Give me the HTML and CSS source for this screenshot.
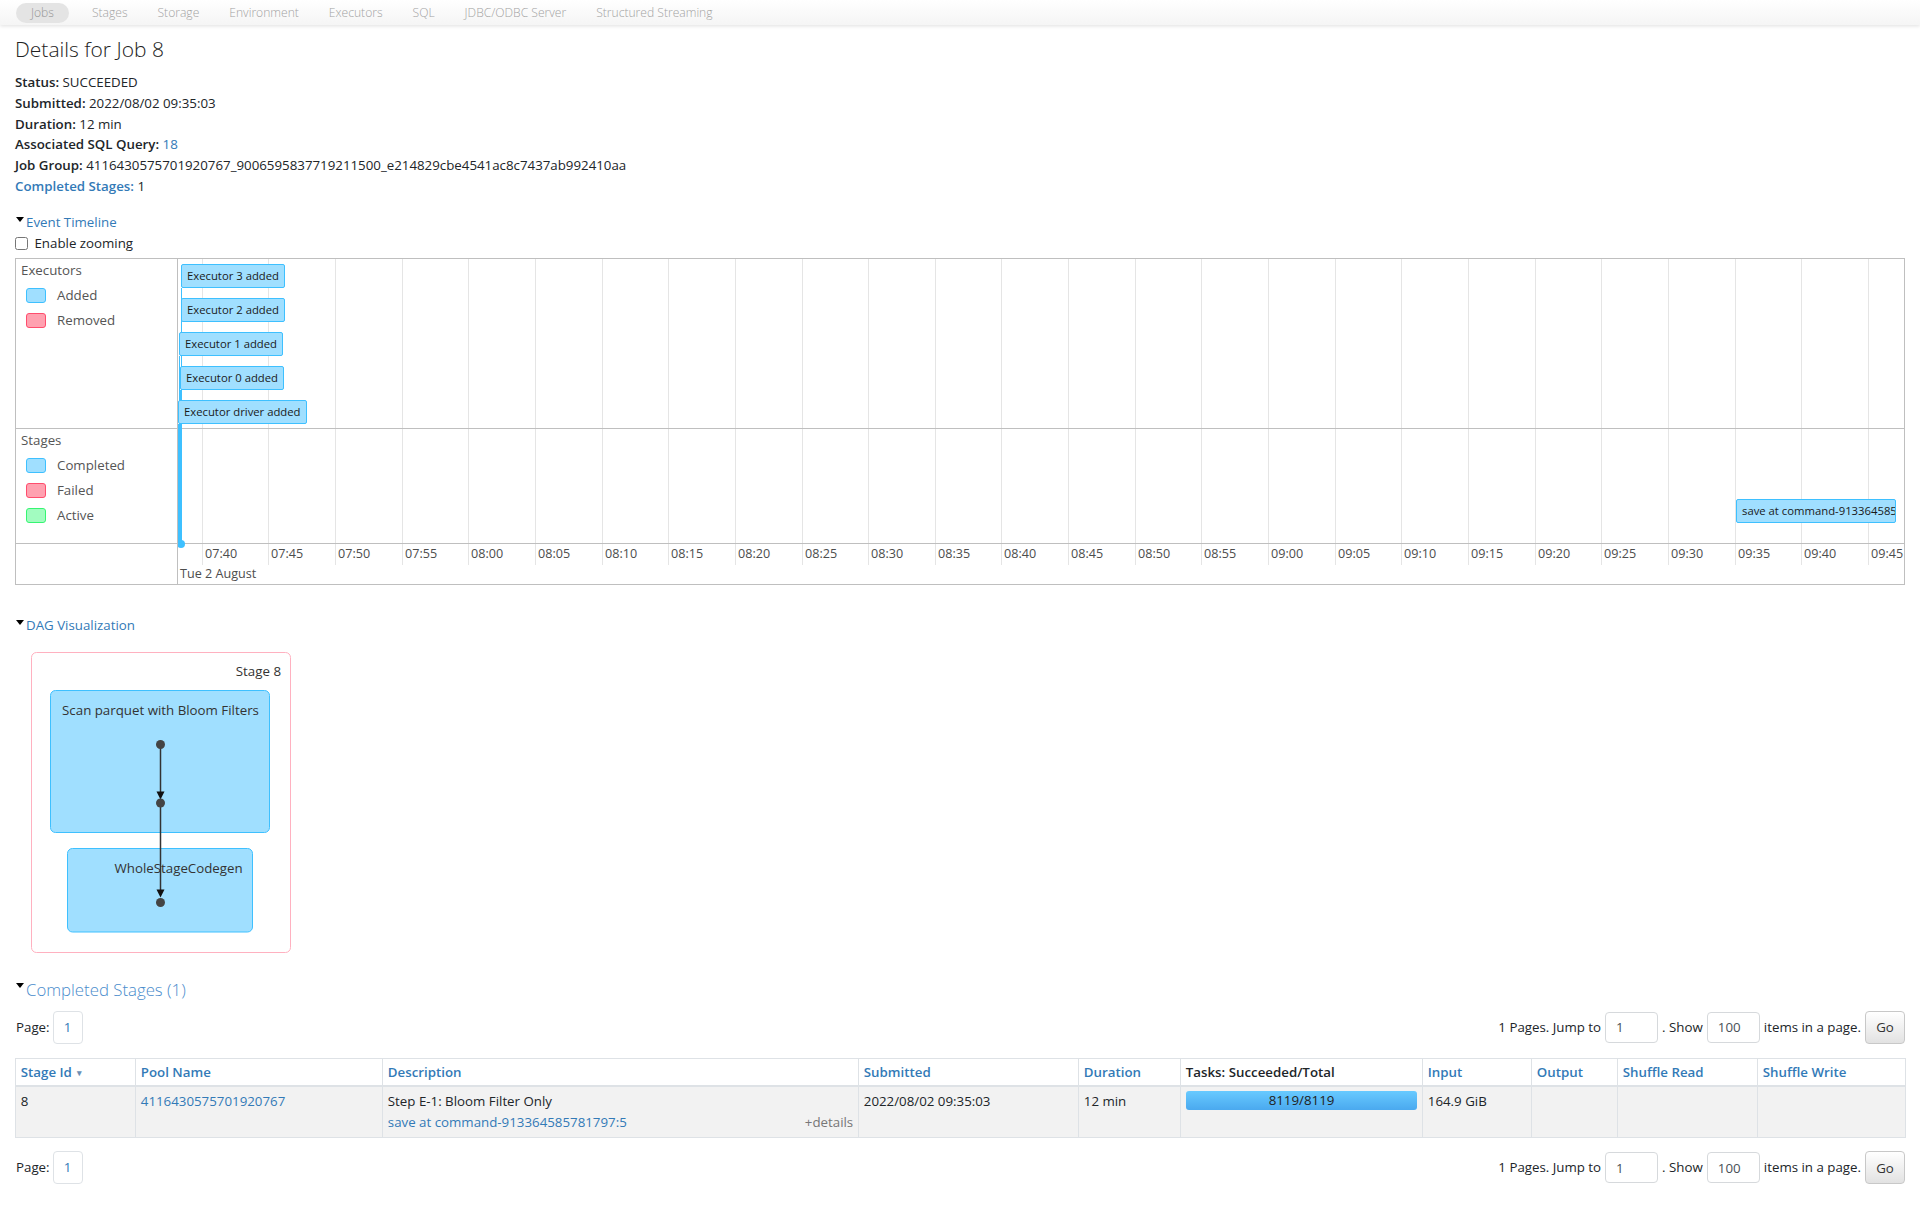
FILE: index.html
```html
<!DOCTYPE html>
<html lang="en">
<head>
<meta charset="utf-8">
<title>Details for Job 8</title>
<link rel="stylesheet" href="styles.css">
</head>
<body>
<nav class="navbar">
  <ul class="nav">
    <li class="nav-item active"><a href="#">Jobs</a></li>
    <li class="nav-item"><a href="#">Stages</a></li>
    <li class="nav-item"><a href="#">Storage</a></li>
    <li class="nav-item"><a href="#">Environment</a></li>
    <li class="nav-item"><a href="#">Executors</a></li>
    <li class="nav-item"><a href="#">SQL</a></li>
    <li class="nav-item"><a href="#">JDBC/ODBC Server</a></li>
    <li class="nav-item"><a href="#">Structured Streaming</a></li>
  </ul>
</nav>
<main class="container">
  <h3 class="page-title">Details for Job 8</h3>
  <ul class="summary">
    <li><strong>Status:</strong> SUCCEEDED</li>
    <li><strong>Submitted:</strong> 2022/08/02 09:35:03</li>
    <li><strong>Duration:</strong> 12 min</li>
    <li><strong>Associated SQL Query:</strong> <a href="#">18</a></li>
    <li><strong>Job Group:</strong> 4116430575701920767_9006595837719211500_e214829cbe4541ac8c7437ab992410aa</li>
    <li><a href="#"><strong>Completed Stages:</strong></a> 1</li>
  </ul>

  <div class="toggle toggle-timeline"><span class="arrow-open"></span><a href="#">Event Timeline</a></div>
  <label class="zoom-toggle"><input type="checkbox"> Enable zooming</label>

  <div class="timeline">
    <div class="tl-legend tl-legend-exec">
      <div class="legend-title">Executors</div>
      <div class="legend-item"><span class="swatch swatch-blue"></span>Added</div>
      <div class="legend-item"><span class="swatch swatch-red"></span>Removed</div>
    </div>
    <div class="tl-legend tl-legend-stage">
      <div class="legend-title">Stages</div>
      <div class="legend-item"><span class="swatch swatch-blue"></span>Completed</div>
      <div class="legend-item"><span class="swatch swatch-red"></span>Failed</div>
      <div class="legend-item"><span class="swatch swatch-green"></span>Active</div>
    </div>
    <div class="tl-legend tl-legend-axis"></div>

    <div class="tl-canvas">
      <svg class="tl-grid" width="1726" height="306" viewBox="0 0 1726 306">
        <rect x="24" y="0" width="1" height="306"/><rect x="90" y="0" width="1" height="306"/>
        <rect x="157" y="0" width="1" height="306"/><rect x="224" y="0" width="1" height="306"/>
        <rect x="290" y="0" width="1" height="306"/><rect x="357" y="0" width="1" height="306"/>
        <rect x="424" y="0" width="1" height="306"/><rect x="490" y="0" width="1" height="306"/>
        <rect x="557" y="0" width="1" height="306"/><rect x="624" y="0" width="1" height="306"/>
        <rect x="690" y="0" width="1" height="306"/><rect x="757" y="0" width="1" height="306"/>
        <rect x="823" y="0" width="1" height="306"/><rect x="890" y="0" width="1" height="306"/>
        <rect x="957" y="0" width="1" height="306"/><rect x="1023" y="0" width="1" height="306"/>
        <rect x="1090" y="0" width="1" height="306"/><rect x="1157" y="0" width="1" height="306"/>
        <rect x="1223" y="0" width="1" height="306"/><rect x="1290" y="0" width="1" height="306"/>
        <rect x="1357" y="0" width="1" height="306"/><rect x="1423" y="0" width="1" height="306"/>
        <rect x="1490" y="0" width="1" height="306"/><rect x="1557" y="0" width="1" height="306"/>
        <rect x="1623" y="0" width="1" height="306"/><rect x="1690" y="0" width="1" height="306"/>
      </svg>
      <div class="tl-row tl-row-exec"></div>
      <div class="tl-row tl-row-stage"></div>
      <div class="tl-row tl-row-axis"></div>

      <span class="tl-line" style="left:3px;top:29px;height:255px"></span>
      <span class="tl-line" style="left:3px;top:63px;height:221px"></span>
      <span class="tl-line" style="left:1px;top:97px;height:187px"></span>
      <span class="tl-line" style="left:2px;top:131px;height:153px"></span>
      <span class="tl-line" style="left:0px;top:165px;height:119px"></span>
      <span class="tl-dot"></span>

      <div class="tl-box" style="left:3px;top:5px">Executor 3 added</div>
      <div class="tl-box" style="left:3px;top:39px">Executor 2 added</div>
      <div class="tl-box" style="left:1px;top:73px">Executor 1 added</div>
      <div class="tl-box" style="left:2px;top:107px">Executor 0 added</div>
      <div class="tl-box" style="left:0px;top:141px">Executor driver added</div>

      <div class="tl-box tl-range" style="left:1558px;top:240px;width:160px" title="save at command-913364585781797:5">save at command-913364585781797:5</div>

      <span class="tl-label" style="left:27px">07:40</span>
      <span class="tl-label" style="left:93px">07:45</span>
      <span class="tl-label" style="left:160px">07:50</span>
      <span class="tl-label" style="left:227px">07:55</span>
      <span class="tl-label" style="left:293px">08:00</span>
      <span class="tl-label" style="left:360px">08:05</span>
      <span class="tl-label" style="left:427px">08:10</span>
      <span class="tl-label" style="left:493px">08:15</span>
      <span class="tl-label" style="left:560px">08:20</span>
      <span class="tl-label" style="left:627px">08:25</span>
      <span class="tl-label" style="left:693px">08:30</span>
      <span class="tl-label" style="left:760px">08:35</span>
      <span class="tl-label" style="left:826px">08:40</span>
      <span class="tl-label" style="left:893px">08:45</span>
      <span class="tl-label" style="left:960px">08:50</span>
      <span class="tl-label" style="left:1026px">08:55</span>
      <span class="tl-label" style="left:1093px">09:00</span>
      <span class="tl-label" style="left:1160px">09:05</span>
      <span class="tl-label" style="left:1226px">09:10</span>
      <span class="tl-label" style="left:1293px">09:15</span>
      <span class="tl-label" style="left:1360px">09:20</span>
      <span class="tl-label" style="left:1426px">09:25</span>
      <span class="tl-label" style="left:1493px">09:30</span>
      <span class="tl-label" style="left:1560px">09:35</span>
      <span class="tl-label" style="left:1626px">09:40</span>
      <span class="tl-label" style="left:1693px">09:45</span>
      <span class="tl-label tl-major" style="left:2px">Tue 2 August</span>
    </div>
  </div>

  <div class="toggle toggle-dag"><span class="arrow-open"></span><a href="#">DAG Visualization</a></div>
  <svg class="dag" width="300" height="320" viewBox="0 0 300 320">
    <rect class="dag-stage" x="16.5" y="12.5" width="259" height="300" rx="5"/>
    <text class="dag-text" x="266" y="36" text-anchor="end">Stage 8</text>
    <rect class="dag-cluster" x="35.5" y="50.5" width="219" height="142" rx="5"/>
    <text class="dag-text" x="145.5" y="75" text-anchor="middle">Scan parquet with Bloom Filters</text>
    <rect class="dag-cluster" x="52.5" y="208.5" width="185" height="83.5" rx="5"/>
    <text class="dag-text" x="99.5" y="233">WholeStageCodegen</text>
    <line class="dag-edge" x1="145.5" y1="104.5" x2="145.5" y2="153"/>
    <path class="dag-arrow" d="M141.5 151.5 L149.5 151.5 L145.5 159.5 Z"/>
    <line class="dag-edge" x1="145.5" y1="163" x2="145.5" y2="251"/>
    <path class="dag-arrow" d="M141.5 249.5 L149.5 249.5 L145.5 257.5 Z"/>
    <circle class="dag-node" cx="145.5" cy="104.5" r="4.5"/>
    <circle class="dag-node" cx="145.5" cy="163" r="4.5"/>
    <circle class="dag-node" cx="145.5" cy="262.5" r="4.5"/>
  </svg>

  <h4 class="toggle toggle-stages"><span class="arrow-open arrow-lg"></span><a href="#">Completed Stages (1)</a></h4>

  <div class="paging paging-top">
    <div class="page-left"><span class="page-label">Page:</span><a class="page-link" href="#">1</a></div>
    <form class="page-form">
      <label>1 Pages. Jump to</label>
      <input class="page-input" type="text" value="1">
      <label>. Show</label>
      <input class="page-input" type="text" value="100">
      <label>items in a page.</label>
      <button class="btn-go" type="button">Go</button>
    </form>
  </div>

  <table class="stage-table">
    <colgroup>
      <col class="c-id"><col class="c-pool"><col class="c-desc"><col class="c-sub"><col class="c-dur">
      <col class="c-tasks"><col class="c-in"><col class="c-out"><col class="c-sr"><col class="c-sw">
    </colgroup>
    <thead>
      <tr>
        <th><a href="#">Stage Id <span class="sort-arrow">&#x25BE;</span></a></th>
        <th><a href="#">Pool Name</a></th>
        <th><a href="#">Description</a></th>
        <th><a href="#">Submitted</a></th>
        <th><a href="#">Duration</a></th>
        <th class="th-plain">Tasks: Succeeded/Total</th>
        <th><a href="#">Input</a></th>
        <th><a href="#">Output</a></th>
        <th><a href="#">Shuffle Read</a></th>
        <th><a href="#">Shuffle Write</a></th>
      </tr>
    </thead>
    <tbody>
      <tr>
        <td>8</td>
        <td><a href="#">4116430575701920767</a></td>
        <td>
          <div>Step E-1: Bloom Filter Only</div>
          <div><span class="expand-details">+details</span><a href="#">save at command-913364585781797:5</a></div>
        </td>
        <td>2022/08/02 09:35:03</td>
        <td>12 min</td>
        <td><div class="progress">8119/8119</div></td>
        <td>164.9 GiB</td>
        <td></td>
        <td></td>
        <td></td>
      </tr>
    </tbody>
  </table>

  <div class="paging paging-bottom">
    <div class="page-left"><span class="page-label">Page:</span><a class="page-link" href="#">1</a></div>
    <form class="page-form">
      <label>1 Pages. Jump to</label>
      <input class="page-input" type="text" value="1">
      <label>. Show</label>
      <input class="page-input" type="text" value="100">
      <label>items in a page.</label>
      <button class="btn-go" type="button">Go</button>
    </form>
  </div>
</main>
</body>
</html>
```
FILE: styles.css
```css
html, body {
  margin: 0;
  padding: 0;
}
body {
  font-family: "Open Sans", "Noto Sans", "Liberation Sans", sans-serif;
  font-size: 13.3px;
  line-height: 20.8px;
  color: #212529;
  background: #ffffff;
}
a {
  color: #337ab7;
  text-decoration: none;
}

/* ---------- nav ---------- */
.navbar {
  height: 25px;
  background: linear-gradient(#ffffff, #f5f5f5);
  box-shadow: 0 1px 4px rgba(0, 0, 0, 0.13);
}
.nav {
  list-style: none;
  margin: 0;
  padding: 0 0 0 16px;
  height: 25px;
  display: flex;
  align-items: center;
}
.nav-item a {
  display: block;
  padding: 0 15px;
  line-height: 20px;
  font-size: 12.1px;
  font-weight: 300;
  color: #a3a3a3;
}
.nav-item.active {
  margin-right: 8px;
}
.nav-item.active a {
  background: #e4e4e4;
  border-radius: 10px;
  color: #969696;
}

/* ---------- header / summary ---------- */
.container {
  padding: 0 15px;
}
.page-title {
  margin: 11.6px 0 0;
  font-size: 21px;
  line-height: 25px;
  font-weight: 300;
  color: #222;
}
.summary {
  list-style: none;
  margin: 10.4px 0 0;
  padding: 0;
}
.summary strong {
  font-weight: 600;
}

.toggle {
  margin: 0;
  white-space: nowrap;
}
.toggle-timeline {
  margin-top: 15.1px;
}
.arrow-open {
  display: inline-block;
  width: 0;
  height: 0;
  margin: 0 2px 0 1px;
  border-left: 4px solid transparent;
  border-right: 4px solid transparent;
  border-top: 5px solid #000;
  vertical-align: 5px;
}
.arrow-lg {
  vertical-align: 8px;
}
.zoom-toggle {
  display: block;
}
.zoom-toggle input {
  width: 13px;
  height: 13px;
  margin: 0 3px 0 0;
  vertical-align: -2px;
}

/* ---------- timeline ---------- */
.timeline {
  margin-top: 4.5px;
  display: grid;
  grid-template-columns: 162px 1726px;
  grid-template-rows: 170px 115px 40px;
  border: 1px solid #bfbfbf;
}
.tl-legend {
  grid-column: 1;
  box-sizing: border-box;
  border-right: 1px solid #bfbfbf;
  padding: 1px 0 0 5px;
  color: #555;
}
.tl-legend-exec {
  grid-row: 1;
  border-bottom: 1px solid #bfbfbf;
}
.tl-legend-stage {
  grid-row: 2;
  border-bottom: 1px solid #bfbfbf;
}
.tl-legend-axis {
  grid-row: 3;
}
.legend-title {
  line-height: 20.8px;
  margin-bottom: 2px;
}
.legend-item {
  display: flex;
  align-items: center;
  height: 25px;
}
.swatch {
  width: 20px;
  height: 15px;
  box-sizing: border-box;
  border: 1px solid;
  border-radius: 3px;
  margin: 0 11px 0 5px;
}
.swatch-blue {
  background: #a0dfff;
  border-color: #3ec0ff;
}
.swatch-red {
  background: #ffa1b0;
  border-color: #ff4d6d;
}
.swatch-green {
  background: #a2fcc0;
  border-color: #36f572;
}

.tl-canvas {
  grid-column: 2;
  grid-row: 1 / 4;
  position: relative;
  overflow: hidden;
  z-index: 0;
}
.tl-grid {
  position: absolute;
  left: 0;
  top: 0;
  z-index: -1;
}
.tl-grid rect {
  fill: #e5e5e5;
}
.tl-row {
  box-sizing: border-box;
}
.tl-row-exec {
  height: 170px;
  border-bottom: 1px solid #bfbfbf;
}
.tl-row-stage {
  height: 115px;
  border-bottom: 1px solid #bfbfbf;
}
.tl-row-axis {
  height: 40px;
}
.tl-line {
  position: absolute;
  width: 1px;
  background: #3ec0ff;
}
.tl-dot {
  position: absolute;
  left: -1px;
  top: 281px;
  width: 8px;
  height: 8px;
  border-radius: 50%;
  background: #3ec0ff;
}
.tl-box {
  position: absolute;
  height: 24px;
  box-sizing: border-box;
  padding: 0 5px;
  line-height: 22px;
  font-size: 11.3px;
  color: #1a1a1a;
  background: #a0dfff;
  border: 1px solid #3ec0ff;
  border-radius: 2px;
  white-space: nowrap;
}
.tl-range {
  overflow: hidden;
}
.tl-label {
  position: absolute;
  top: 286px;
  font-size: 12.6px;
  line-height: 18px;
  color: #4d4d4d;
  white-space: nowrap;
}
.tl-major {
  top: 306px;
}

/* ---------- DAG ---------- */
.toggle-dag {
  margin-top: 30.2px;
}
.dag {
  display: block;
  margin-top: 4px;
}
.dag-stage {
  fill: #ffffff;
  stroke: #ffb1c0;
  stroke-width: 1;
}
.dag-cluster {
  fill: #a0dfff;
  stroke: #3ec0ff;
  stroke-width: 1;
}
.dag-text {
  font-family: "Open Sans", "Noto Sans", sans-serif;
  font-size: 13.3px;
  fill: #333333;
}
.dag-edge {
  stroke: #333333;
  stroke-width: 1.5;
}
.dag-arrow {
  fill: #111111;
}
.dag-node {
  fill: #444444;
}

/* ---------- completed stages ---------- */
.toggle-stages {
  margin-top: 18.6px;
  font-size: 16.8px;
  line-height: 21.6px;
  font-weight: 300;
}
.toggle-stages a {
  color: #4a8ccc;
}
.paging {
  display: flex;
  justify-content: space-between;
  align-items: center;
  height: 33px;
}
.paging-top {
  margin-top: 10.5px;
}
.paging-bottom {
  margin-top: 13.2px;
}
.page-left {
  display: flex;
  align-items: center;
}
.page-label {
  margin-left: 1px;
  margin-right: 3px;
}
.page-link {
  display: block;
  width: 30px;
  height: 33px;
  box-sizing: border-box;
  border: 1px solid #dee2e6;
  border-radius: 4px;
  text-align: center;
  line-height: 31px;
}
.page-form {
  display: flex;
  align-items: center;
  gap: 4px;
  margin: 0;
}
.page-input {
  width: 53px;
  height: 31px;
  box-sizing: border-box;
  border: 1px solid #d6d9dc;
  border-radius: 4px;
  padding: 0 10px;
  font-family: inherit;
  font-size: 13.3px;
  color: #495057;
  background: #fff;
  margin: 0;
}
.btn-go {
  width: 40px;
  height: 33px;
  box-sizing: border-box;
  border: 1px solid #c8c8c8;
  border-radius: 4px;
  background: linear-gradient(#ffffff, #e2e2e2);
  font-family: inherit;
  font-size: 13.3px;
  color: #333;
  padding: 0;
  margin: 0;
}

.stage-table {
  margin-top: 14px;
  width: 1890px;
  table-layout: fixed;
  border-collapse: collapse;
}
.c-id { width: 120px; }
.c-pool { width: 247px; }
.c-desc { width: 476px; }
.c-sub { width: 220px; }
.c-dur { width: 102px; }
.c-tasks { width: 242px; }
.c-in { width: 109px; }
.c-out { width: 86px; }
.c-sr { width: 140px; }
.c-sw { width: 148px; }
.stage-table th,
.stage-table td {
  border: 1px solid #dee2e6;
  padding: 4.8px;
  text-align: left;
  vertical-align: top;
}
.stage-table th {
  padding-top: 5px;
  padding-bottom: 4px;
  line-height: 16px;
  font-weight: 600;
  border-bottom: 2px solid #dee2e6;
  white-space: nowrap;
}
.stage-table .th-plain {
  color: #212529;
}
.sort-arrow {
  font-size: 9px;
  color: #6c8fb5;
  vertical-align: 1px;
  margin-left: 2px;
}
.stage-table td {
  line-height: 20.4px;
}
.stage-table tbody tr {
  background: #f2f2f2;
}
.expand-details {
  float: right;
  color: #777;
}
.progress {
  height: 19px;
  border-radius: 3px;
  background: linear-gradient(#68caff, #4aa9ef);
  text-align: center;
  line-height: 19px;
  color: #222;
}
```
